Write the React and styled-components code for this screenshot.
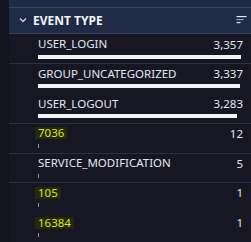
import styled, { createGlobalStyle } from 'styled-components';

const GlobalStyle = createGlobalStyle`
  html, body {
    margin: 0;
    padding: 0;
    background: #14141e;
  }
  body {
    font-family: "Noto Sans", "Open Sans", sans-serif;
  }
`;

const StyledPage = styled.div`
  display: flex;
  width: 251px;
  height: 242px;
  overflow: hidden;
  background: #14141e;
`;

const StyledGutter = styled.div`
  width: 9px;
  flex-shrink: 0;
`;

const StyledPanel = styled.div`
  flex: 1;
  display: flex;
  flex-direction: column;
  background: #171724;
`;

const StyledPrevSection = styled.div`
  height: 7px;
  background: #1f2a44;
  border-bottom: 1px solid #34425f;
`;

const StyledHeader = styled.div`
  height: 25px;
  display: flex;
  align-items: center;
  padding: 0 4px 0 10px;
  background: #1f2a44;
  border-bottom: 1px solid #34425f;
`;

const StyledTitle = styled.div`
  flex: 1;
  margin-left: 6px;
  font-size: 12px;
  font-weight: 700;
  color: #f2f4f8;
`;

const StyledRow = styled.div`
  height: 30px;
  box-sizing: border-box;
  padding: 1px 8px 0 29px;
  border-top: 1px solid ${({ $divider }) => ($divider ? '#2a3147' : 'transparent')};
`;

const StyledRowTop = styled.div`
  display: flex;
  justify-content: space-between;
  align-items: center;
  height: 17px;
  font-size: 11.5px;
  color: #e2e6ee;
`;

const StyledLabel = styled.span`
  padding: ${({ $hit }) => ($hit ? '0 3px' : '0')};
  margin-left: ${({ $hit }) => ($hit ? '-3px' : '0')};
  color: ${({ $hit }) => ($hit ? '#d9e61c' : '#e2e6ee')};
  background: ${({ $hit }) => ($hit ? '#26270f' : 'transparent')};
  line-height: 12px;
`;

const StyledBar = styled.div`
  margin-top: 2px;
  height: 4px;
  background: ${({ $tiny }) => ($tiny ? '#8e93a3' : '#f1f2f6')};
`;

const rows = [
  { name: 'USER_LOGIN', count: 3357 },
  { name: 'GROUP_UNCATEGORIZED', count: 3337, divider: true },
  { name: 'USER_LOGOUT', count: 3283 },
  { name: '7036', count: 12, hit: true, divider: true },
  { name: 'SERVICE_MODIFICATION', count: 5, divider: true },
  { name: '105', count: 1, hit: true, divider: true },
  { name: '16384', count: 1, hit: true },
];

const max = 3357;
const fullWidth = 203;

function Chevron() {
  return (
    <svg width="8" height="6" viewBox="0 0 8 6">
      <path d="M1 1.5 L4 4.5 L7 1.5" fill="none" stroke="#c9d0dc" strokeWidth="1.3" />
    </svg>
  );
}

function SortIcon() {
  return (
    <svg width="11" height="8" viewBox="0 0 11 8">
      <rect x="0.5" y="0" width="10" height="1.2" fill="#e6e9f0" />
      <rect x="0.5" y="3" width="7" height="1.2" fill="#9aa2b2" />
      <rect x="0.5" y="6" width="4" height="1.2" fill="#e6e9f0" />
    </svg>
  );
}

function App() {
  return (
    <StyledPage>
      <GlobalStyle />
      <StyledGutter />
      <StyledPanel>
        <StyledPrevSection />
        <StyledHeader>
          <Chevron />
          <StyledTitle>EVENT TYPE</StyledTitle>
          <SortIcon />
        </StyledHeader>
        {rows.map(({ name, count, hit, divider }, i) => {
          const w = Math.max(1, Math.round((count / max) * fullWidth));
          return (
            <StyledRow key={name} $divider={divider && i > 0}>
              <StyledRowTop>
                <StyledLabel $hit={hit}>{name}</StyledLabel>
                <span>{count.toLocaleString('en-US')}</span>
              </StyledRowTop>
              <StyledBar $tiny={w < 3} style={{ width: `${w}px` }} />
            </StyledRow>
          );
        })}
      </StyledPanel>
    </StyledPage>
  );
}

export default App;
